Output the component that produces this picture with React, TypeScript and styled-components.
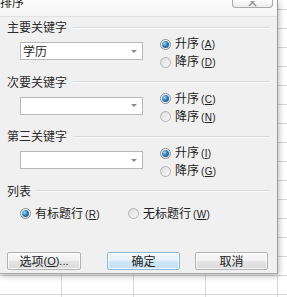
import React from 'react';
import styled, { createGlobalStyle } from 'styled-components';

const Global = createGlobalStyle`
  html, body { margin: 0; padding: 0; background: #fff; }
  body {
    font-family: "Noto Sans CJK SC", "Microsoft YaHei", sans-serif;
    font-size: 12px;
    color: #1e1e1e;
  }
  * { box-sizing: border-box; }
`;

const Page = styled.div`
  width: 287px;
  height: 297px;
  overflow: hidden;
  background-color: #fff;
  background-image:
    linear-gradient(to right, #d6d6d6 1px, transparent 1px),
    linear-gradient(to bottom, #d6d6d6 1px, transparent 1px);
  background-size: 72px 100%, 100% 19px;
  background-position: 61px 0, 0 9px;
`;

const Dialog = styled.div`
  width: 278px;
  height: 274px;
  background: #f0f0f0;
  border-right: 1px solid #9c9c9c;
  border-bottom: 1px solid #a8a8a8;
  box-shadow: 1px 2px 6px rgba(0, 0, 0, 0.28);
  display: flex;
  flex-direction: column;
`;

const TitleBar = styled.div`
  height: 17px;
  display: flex;
  justify-content: space-between;
  align-items: flex-start;
  padding-right: 4px;
  background: linear-gradient(#fbfbfb, #f5f5f5);
  border-bottom: 1px solid #e2e2e2;
  overflow: hidden;
`;

const TitleText = styled.span`
  font-size: 12px;
  line-height: 12px;
  margin-top: -4px;
  color: #222;
`;

const CloseButton = styled.div`
  width: 41px;
  height: 8px;
  border: 1px solid #a9a9a9;
  border-top: none;
  border-radius: 0 0 4px 4px;
  background: linear-gradient(#fdfdfd, #ebebeb);
  display: flex;
  justify-content: center;
  align-items: flex-end;
  overflow: hidden;
`;

const Body = styled.div`
  display: flex;
  flex-direction: column;
  padding: 4px 7px 0 7px;
`;

const Section = styled.div`
  display: flex;
  flex-direction: column;
  margin-bottom: 4.5px;
`;

const Header = styled.div`
  display: flex;
  align-items: center;
  gap: 6px;
  height: 12px;
  line-height: 12px;
  font-size: 12px;
  color: #2a2a2a;
  &::after {
    content: "";
    flex: 1;
    height: 1px;
    background: #d8dcdf;
    box-shadow: 0 1px 0 #fafafa;
  }
`;

const KeyRow = styled.div`
  display: flex;
  align-items: flex-start;
  padding-left: 13px;
`;

const Combo = styled.div`
  width: 123px;
  height: 18px;
  margin-top: 9px;
  background: #fff;
  border: 1px solid #b5b8bd;
  display: flex;
  align-items: center;
  justify-content: space-between;
  padding: 0 5px 0 2px;
  font-size: 12px;
  line-height: 16px;
  color: #222;
`;

const Arrow = styled.span`
  width: 0;
  height: 0;
  border-left: 3px solid transparent;
  border-right: 3px solid transparent;
  border-top: 3px solid #8a8a8a;
`;

const RadioColumn = styled.div`
  display: flex;
  flex-direction: column;
  margin-left: 17px;
  margin-top: 2px;
`;

const RadioItem = styled.div`
  display: flex;
  align-items: center;
  gap: 4px;
  height: 18px;
  line-height: 18px;
  font-size: 12px;
  color: #222;
  white-space: nowrap;
`;

const Circle = styled.span<{ $on?: boolean }>`
  width: 11px;
  height: 11px;
  border-radius: 50%;
  border: 1px solid ${p => (p.$on ? '#8a8d91' : '#b3b3b3')};
  background: ${p => (p.$on ? '#f4f4f4' : 'linear-gradient(135deg, #dcdcdc, #fafafa)')};
  display: flex;
  align-items: center;
  justify-content: center;
  flex: none;
  &::after {
    content: "";
    display: ${p => (p.$on ? 'block' : 'none')};
    width: 7px;
    height: 7px;
    border-radius: 50%;
    background: radial-gradient(circle at 35% 35%, #9fd8f7 0, #2f7fb5 45%, #0f456f 100%);
  }
`;

const Accel = styled.span`
  font-family: "Liberation Sans", Arial, sans-serif;
  font-size: 10px;
  margin-left: 2px;
  letter-spacing: 0.3px;
  & u { text-decoration: underline; text-underline-offset: 1px; }
`;

const ListRow = styled.div`
  display: grid;
  grid-template-columns: 108px auto;
  padding-left: 13px;
  margin-top: 8px;
`;

const ButtonRow = styled.div`
  display: flex;
  justify-content: space-between;
  margin-top: 25px;
  padding-right: 2px;
`;

const ButtonGroup = styled.div`
  display: flex;
  gap: 15px;
`;

const Button = styled.div<{ $primary?: boolean; $w?: number }>`
  width: ${p => p.$w ?? 73}px;
  height: 18px;
  border: 1px solid ${p => (p.$primary ? '#8fb8d6' : '#b2b2b2')};
  border-radius: 2px;
  background: ${p =>
    p.$primary
      ? 'linear-gradient(#f0f8fd 0%, #e3f1fa 50%, #cfe7f5 51%, #c4e1f3 100%)'
      : 'linear-gradient(#fafafa 0%, #f0f0f0 50%, #e4e4e4 51%, #dadada 100%)'};
  box-shadow: inset 0 0 0 1px rgba(255, 255, 255, 0.7);
  display: flex;
  align-items: center;
  justify-content: center;
  font-size: 12px;
  line-height: 16px;
  color: #222;
`;

const BtnAccel = styled.span`
  font-family: "Liberation Sans", Arial, sans-serif;
  font-size: 11px;
  & u { text-decoration: underline; text-underline-offset: 1px; }
`;

type RadioProps = { on?: boolean; label: string; accel: string };
const Radio = ({ on, label, accel }: RadioProps) => (
  <RadioItem>
    <Circle $on={on} />
    <span>
      {label}
      <Accel>
        (<u>{accel}</u>)
      </Accel>
    </span>
  </RadioItem>
);

type KeyProps = { title: string; value?: string; up: string; down: string };
const KeySection = ({ title, value, up, down }: KeyProps) => (
  <Section>
    <Header>{title}</Header>
    <KeyRow>
      <Combo>
        <span>{value ?? ''}</span>
        <Arrow />
      </Combo>
      <RadioColumn>
        <Radio on label="升序" accel={up} />
        <Radio label="降序" accel={down} />
      </RadioColumn>
    </KeyRow>
  </Section>
);

export default function App() {
  return (
    <>
      <Global />
      <Page>
        <Dialog>
          <TitleBar>
            <TitleText>排序</TitleText>
            <CloseButton>
              <svg width="9" height="6" viewBox="0 0 9 6">
                <path d="M1 -2 L8 5 M8 -2 L1 5" stroke="#9a9a9a" strokeWidth="1.6" fill="none" />
              </svg>
            </CloseButton>
          </TitleBar>
          <Body>
            <KeySection title="主要关键字" value="学历" up="A" down="D" />
            <KeySection title="次要关键字" up="C" down="N" />
            <KeySection title="第三关键字" up="I" down="G" />
            <Section>
              <Header>列表</Header>
              <ListRow>
                <Radio on label="有标题行" accel="R" />
                <Radio label="无标题行" accel="W" />
              </ListRow>
            </Section>
            <ButtonRow>
              <Button $w={74}>
                选项<BtnAccel>(<u>O</u>)...</BtnAccel>
              </Button>
              <ButtonGroup>
                <Button $primary>确定</Button>
                <Button>取消</Button>
              </ButtonGroup>
            </ButtonRow>
          </Body>
        </Dialog>
      </Page>
    </>
  );
}
